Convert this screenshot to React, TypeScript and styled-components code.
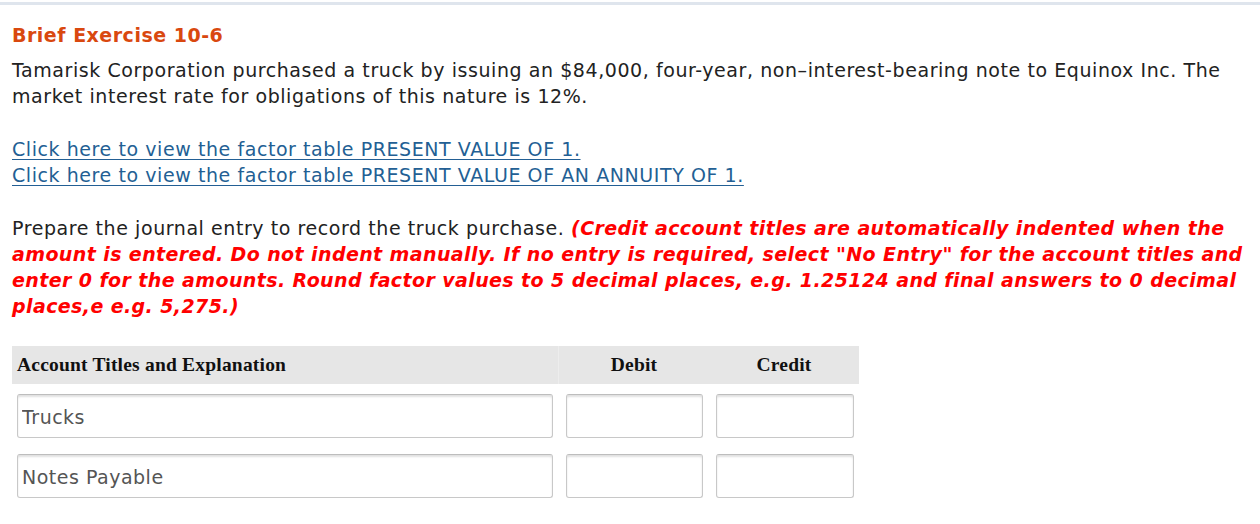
import React from "react";
import styled, { createGlobalStyle } from "styled-components";

const GlobalStyle = createGlobalStyle`
  body {
    margin: 0;
    background: #fff;
    font-family: "DejaVu Sans", Verdana, sans-serif;
    letter-spacing: 0.57px;
    color: #222;
  }
`;

const TopRule = styled.div`
  height: 3px;
  margin-top: 2px;
  background: #dfe5ed;
`;

const Content = styled.div`
  padding: 0 12px;
  width: 1240px;
`;

const Title = styled.h2`
  margin: 17px 0 0;
  font-size: 19px;
  line-height: 26px;
  font-weight: bold;
  letter-spacing: 0.5px;
  color: #d9480f;
`;

const Para = styled.p<{ gap?: number }>`
  margin: ${({ gap }) => gap ?? 0}px 0 0;
  font-size: 19px;
  line-height: 26px;
`;

const FactorLink = styled.a`
  display: block;
  font-size: 19px;
  line-height: 26px;
  color: #235f94;
  text-decoration: underline;
  text-underline-offset: 3px;
  cursor: pointer;
`;

const Links = styled.div`
  margin-top: 27px;
`;

const Note = styled.span`
  color: #ff0000;
  font-weight: bold;
  font-style: italic;
  letter-spacing: 0.4px;
`;

const Journal = styled.div`
  margin-top: 27px;
  width: 847px;
  display: grid;
  grid-template-columns: 546px 151px 150px;
`;

const HeadCell = styled.div<{ center?: boolean; divider?: boolean }>`
  height: 38px;
  display: flex;
  align-items: center;
  justify-content: ${({ center }) => (center ? "center" : "flex-start")};
  padding-left: ${({ center }) => (center ? 0 : 5)}px;
  background: #e6e6e6;
  border-left: ${({ divider }) => (divider ? "1px solid #ededed" : "none")};
  font-family: "Liberation Serif", "Times New Roman", serif;
  font-weight: bold;
  font-size: 19.5px;
  letter-spacing: 0.2px;
  color: #111;
`;

const Cell = styled.div<{ left: number; right: number }>`
  padding: 10px ${({ right }) => right}px 6px ${({ left }) => left}px;
`;

const Field = styled.input`
  box-sizing: border-box;
  width: 100%;
  height: 44px;
  margin: 0;
  padding: 2px 4px 0;
  border: 1px solid #c8c8c8;
  border-top-color: #bdbdbd;
  border-radius: 3px;
  box-shadow: inset 0 2px 2px rgba(0, 0, 0, 0.12);
  background: #fff;
  font-family: "DejaVu Sans", Verdana, sans-serif;
  font-size: 19px;
  letter-spacing: 0.5px;
  color: #555;
  outline: none;
`;

const rows = ["Trucks", "Notes Payable"];

export default function App() {
  return (
    <>
      <GlobalStyle />
      <TopRule />
      <Content>
        <Title>Brief Exercise 10-6</Title>
        <Para gap={9}>
          Tamarisk Corporation purchased a truck by issuing an $84,000, four-year,
          non–interest-bearing note to Equinox Inc. The
          <br />
          market interest rate for obligations of this nature is 12%.
        </Para>
        <Links>
          <FactorLink>Click here to view the factor table PRESENT VALUE OF 1.</FactorLink>
          <FactorLink>
            Click here to view the factor table PRESENT VALUE OF AN ANNUITY OF 1.
          </FactorLink>
        </Links>
        <Para gap={27}>
          Prepare the journal entry to record the truck purchase.{" "}
          <Note>
            (Credit account titles are automatically indented when the
            <br />
            amount is entered. Do not indent manually. If no entry is required, select
            "No Entry" for the account titles and
            <br />
            enter 0 for the amounts. Round factor values to 5 decimal places, e.g.
            1.25124 and final answers to 0 decimal
            <br />
            places,e e.g. 5,275.)
          </Note>
        </Para>
        <Journal>
          <HeadCell>Account Titles and Explanation</HeadCell>
          <HeadCell center divider>
            Debit
          </HeadCell>
          <HeadCell center>Credit</HeadCell>
          {rows.map((title) => (
            <React.Fragment key={title}>
              <Cell left={5} right={5}>
                <Field defaultValue={title} />
              </Cell>
              <Cell left={8} right={6}>
                <Field />
              </Cell>
              <Cell left={7} right={5}>
                <Field />
              </Cell>
            </React.Fragment>
          ))}
        </Journal>
      </Content>
    </>
  );
}
